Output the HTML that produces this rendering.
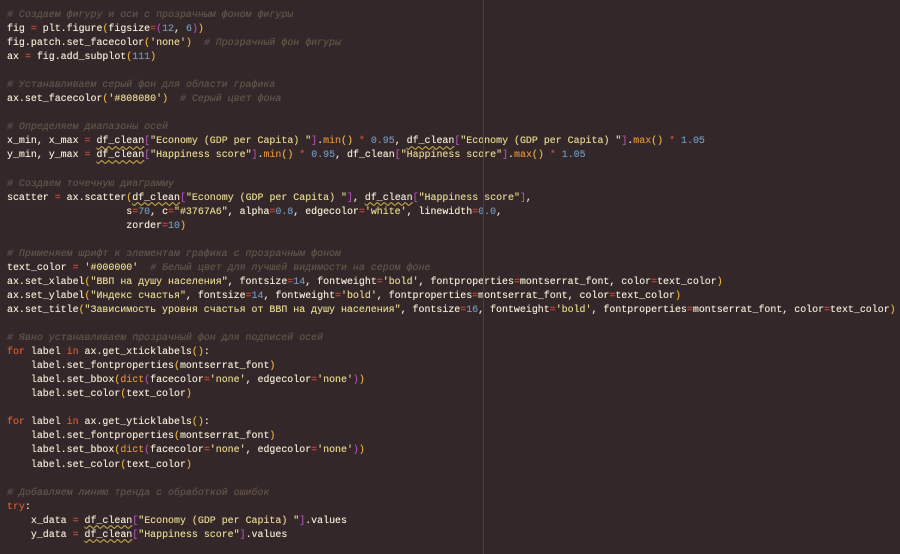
<!DOCTYPE html>
<html><head><meta charset="utf-8"><style>
html,body{margin:0;padding:0;background:#342729;width:900px;height:554px;overflow:hidden}
pre{margin:0;padding:8px 0 0 7px;font-family:"Liberation Mono","DejaVu Sans Mono",monospace;font-size:9.95px;line-height:14.05px;color:#ece7d2;white-space:pre;text-shadow:0 0 0.4px currentColor}
.c{color:#615449;font-style:italic}
.o{color:#cc4b3a}
.p{color:#e4b03c}
.n{color:#6e93b9}
.s{color:#e0d38c}
.k{color:#d4592e}
.f{color:#d88d3a}
.b{color:#a650ab}
.u{text-decoration:underline wavy #b89a30;text-decoration-thickness:1px;text-underline-offset:2px}
.vl{position:absolute;left:483px;top:0;width:1px;height:554px;background:#4a3e3f}
</style></head><body>
<div class="vl"></div>
<pre><span class="c"># Создаем фигуру и оси с прозрачным фоном фигуры</span>
fig <span class="o">=</span> plt.figure<span class="p">(</span>figsize<span class="o">=</span><span class="b">(</span><span class="n">12</span>, <span class="n">6</span><span class="b">)</span><span class="p">)</span>
fig.patch.set_facecolor<span class="p">(</span><span class="s">'none'</span><span class="p">)</span>  <span class="c"># Прозрачный фон фигуры</span>
ax <span class="o">=</span> fig.add_subplot<span class="p">(</span><span class="n">111</span><span class="p">)</span>

<span class="c"># Устанавливаем серый фон для области графика</span>
ax.set_facecolor<span class="p">(</span><span class="s">'#808080'</span><span class="p">)</span>  <span class="c"># Серый цвет фона</span>

<span class="c"># Определяем диапазоны осей</span>
x_min, x_max <span class="o">=</span> <span class="u">df_clean</span><span class="b">[</span><span class="s">"Economy (GDP per Capita) "</span><span class="b">]</span>.<span class="f">min</span><span class="p">()</span> <span class="o">*</span> <span class="n">0.95</span>, <span class="u">df_clean</span><span class="b">[</span><span class="s">"Economy (GDP per Capita) "</span><span class="b">]</span>.<span class="f">max</span><span class="p">()</span> <span class="o">*</span> <span class="n">1.05</span>
y_min, y_max <span class="o">=</span> <span class="u">df_clean</span><span class="b">[</span><span class="s">"Happiness score"</span><span class="b">]</span>.<span class="f">min</span><span class="p">()</span> <span class="o">*</span> <span class="n">0.95</span>, df_clean<span class="b">[</span><span class="s">"Happiness score"</span><span class="b">]</span>.<span class="f">max</span><span class="p">()</span> <span class="o">*</span> <span class="n">1.05</span>

<span class="c"># Создаем точечную диаграмму</span>
scatter <span class="o">=</span> ax.scatter<span class="p">(</span><span class="u">df_clean</span><span class="b">[</span><span class="s">"Economy (GDP per Capita) "</span><span class="b">]</span>, <span class="u">df_clean</span><span class="b">[</span><span class="s">"Happiness score"</span><span class="b">]</span>,
                    s<span class="o">=</span><span class="n">70</span>, c<span class="o">=</span><span class="s">"#3767A6"</span>, alpha<span class="o">=</span><span class="n">0.8</span>, edgecolor<span class="o">=</span><span class="s">'white'</span>, linewidth<span class="o">=</span><span class="n">0.0</span>,
                    zorder<span class="o">=</span><span class="n">10</span><span class="p">)</span>

<span class="c"># Применяем шрифт к элементам графика с прозрачным фоном</span>
text_color <span class="o">=</span> <span class="s">'#000000'</span>  <span class="c"># Белый цвет для лучшей видимости на сером фоне</span>
ax.set_xlabel<span class="p">(</span><span class="s">"ВВП на душу населения"</span>, fontsize<span class="o">=</span><span class="n">14</span>, fontweight<span class="o">=</span><span class="s">'bold'</span>, fontproperties<span class="o">=</span>montserrat_font, color<span class="o">=</span>text_color<span class="p">)</span>
ax.set_ylabel<span class="p">(</span><span class="s">"Индекс счастья"</span>, fontsize<span class="o">=</span><span class="n">14</span>, fontweight<span class="o">=</span><span class="s">'bold'</span>, fontproperties<span class="o">=</span>montserrat_font, color<span class="o">=</span>text_color<span class="p">)</span>
ax.set_title<span class="p">(</span><span class="s">"Зависимость уровня счастья от ВВП на душу населения"</span>, fontsize<span class="o">=</span><span class="n">16</span>, fontweight<span class="o">=</span><span class="s">'bold'</span>, fontproperties<span class="o">=</span>montserrat_font, color<span class="o">=</span>text_color<span class="p">)</span>

<span class="c"># Явно устанавливаем прозрачный фон для подписей осей</span>
<span class="k">for</span> label <span class="k">in</span> ax.get_xticklabels<span class="p">()</span>:
    label.set_fontproperties<span class="p">(</span>montserrat_font<span class="p">)</span>
    label.set_bbox<span class="p">(</span><span class="f">dict</span><span class="b">(</span>facecolor<span class="o">=</span><span class="s">'none'</span>, edgecolor<span class="o">=</span><span class="s">'none'</span><span class="b">)</span><span class="p">)</span>
    label.set_color<span class="p">(</span>text_color<span class="p">)</span>

<span class="k">for</span> label <span class="k">in</span> ax.get_yticklabels<span class="p">()</span>:
    label.set_fontproperties<span class="p">(</span>montserrat_font<span class="p">)</span>
    label.set_bbox<span class="p">(</span><span class="f">dict</span><span class="b">(</span>facecolor<span class="o">=</span><span class="s">'none'</span>, edgecolor<span class="o">=</span><span class="s">'none'</span><span class="b">)</span><span class="p">)</span>
    label.set_color<span class="p">(</span>text_color<span class="p">)</span>

<span class="c"># Добавляем линию тренда с обработкой ошибок</span>
<span class="k">try</span>:
    x_data <span class="o">=</span> <span class="u">df_clean</span><span class="b">[</span><span class="s">"Economy (GDP per Capita) "</span><span class="b">]</span>.values
    y_data <span class="o">=</span> <span class="u">df_clean</span><span class="b">[</span><span class="s">"Happiness score"</span><span class="b">]</span>.values
</pre>
</body></html>
